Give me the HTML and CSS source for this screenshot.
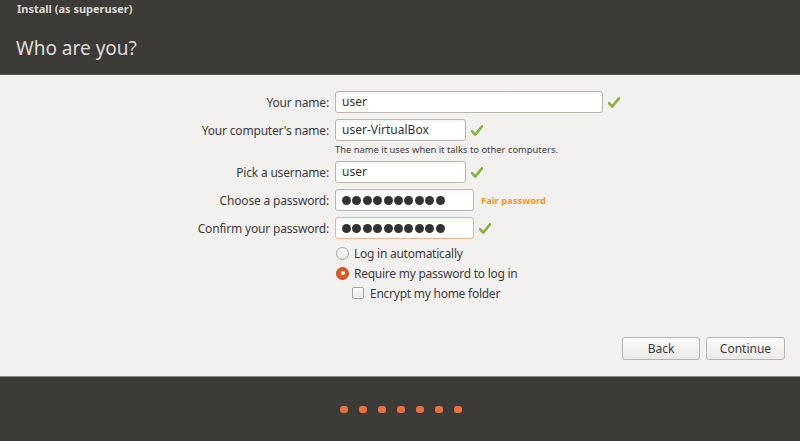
FILE: index.html
```html
<!DOCTYPE html>
<html>
<head>
<meta charset="utf-8">
<link rel="stylesheet" href="styles.css">
</head>
<body>
<div class="window">
  <header class="header">
    <div class="wm-title">Install (as superuser)</div>
    <h1 class="page-title">Who are you?</h1>
  </header>
  <main class="content">
    <div class="form">
      <div class="row">
        <label class="label">Your name:</label>
        <div class="field">
          <div class="entry entry-wide">user</div>
          <svg class="check" viewBox="0 0 12 11"><path d="M1 6.2 L4.2 9.6 L11 1.4" /></svg>
        </div>
      </div>
      <div class="row">
        <label class="label">Your computer's name:</label>
        <div class="field">
          <div class="entry entry-mid">user-VirtualBox</div>
          <svg class="check" viewBox="0 0 12 11"><path d="M1 6.2 L4.2 9.6 L11 1.4" /></svg>
        </div>
      </div>
      <div class="row row-hint">
        <span></span>
        <div class="hint">The name it uses when it talks to other computers.</div>
      </div>
      <div class="row">
        <label class="label">Pick a username:</label>
        <div class="field">
          <div class="entry entry-mid">user</div>
          <svg class="check" viewBox="0 0 12 11"><path d="M1 6.2 L4.2 9.6 L11 1.4" /></svg>
        </div>
      </div>
      <div class="row">
        <label class="label">Choose a password:</label>
        <div class="field">
          <div class="entry entry-pw"><span class="dots"><i></i><i></i><i></i><i></i><i></i><i></i><i></i><i></i><i></i><i></i></span></div>
          <span class="strength">Fair password</span>
        </div>
      </div>
      <div class="row">
        <label class="label">Confirm your password:</label>
        <div class="field">
          <div class="entry entry-pw entry-focus"><span class="dots"><i></i><i></i><i></i><i></i><i></i><i></i><i></i><i></i><i></i><i></i></span></div>
          <svg class="check" viewBox="0 0 12 11"><path d="M1 6.2 L4.2 9.6 L11 1.4" /></svg>
        </div>
      </div>
      <div class="row row-opt first-opt">
        <span></span>
        <div class="option"><span class="radio"></span>Log in automatically</div>
      </div>
      <div class="row row-opt">
        <span></span>
        <div class="option"><span class="radio radio-on"></span>Require my password to log in</div>
      </div>
      <div class="row row-opt">
        <span></span>
        <div class="option option-sub"><span class="checkbox"></span>Encrypt my home folder</div>
      </div>
    </div>
    <div class="buttons">
      <button class="btn btn-back">Back</button>
      <button class="btn btn-continue">Continue</button>
    </div>
  </main>
  <footer class="footer">
    <div class="progress">
      <span class="dot"></span><span class="dot"></span><span class="dot"></span><span class="dot"></span><span class="dot"></span><span class="dot"></span><span class="dot"></span>
    </div>
  </footer>
</div>
</body>
</html>
```

FILE: styles.css
```css
* { box-sizing: border-box; }
html, body {
  margin: 0;
  padding: 0;
  width: 800px;
  height: 441px;
  overflow: hidden;
  font-family: "Noto Sans", "Open Sans", "DejaVu Sans", sans-serif;
}
.window {
  display: flex;
  flex-direction: column;
  width: 800px;
  height: 441px;
  background: #f2f1f0;
}
.header {
  background: #3c3b37;
  height: 75px;
  padding: 2px 0 0 17px;
  border-bottom: 1px solid #5a5955;
}
.wm-title {
  color: #dcd9d2;
  font-size: 11px;
  font-weight: bold;
  line-height: 14px;
}
.page-title {
  margin: 20px 0 0 -1px;
  font-weight: normal;
  font-size: 19px;
  line-height: 24px;
  color: #dedcd7;
}
.content {
  flex: 1;
  display: flex;
  flex-direction: column;
  padding-top: 16px;
}
.form {
  display: flex;
  flex-direction: column;
  gap: 6px;
}
.row {
  display: grid;
  grid-template-columns: 329px 1fr;
  column-gap: 6px;
  align-items: center;
  height: 22px;
}
.label {
  text-align: right;
  font-size: 12px;
  letter-spacing: -0.18px;
  color: #3c3c3c;
}
.field {
  display: flex;
  align-items: center;
}
.entry {
  height: 22px;
  border: 1px solid #bab5ab;
  border-radius: 3px;
  background: linear-gradient(#f4f4f4, #ffffff 4px);
  font-size: 12px;
  line-height: 20px;
  padding: 0 6px;
  color: #333;
}
.entry-wide { width: 268px; }
.entry-mid { width: 131px; }
.entry-pw { width: 139px; display: flex; align-items: center; }
.entry-focus { border-color: #ebb39a; }
.dots { display: flex; gap: 1.4px; }
.dots i {
  display: block;
  width: 9px;
  height: 9px;
  border-radius: 50%;
  background: #333;
}
.check {
  width: 12px;
  height: 11px;
  margin-left: 5px;
  fill: none;
  stroke: #8ab438;
  stroke-width: 2.6;
  stroke-linecap: round;
  stroke-linejoin: round;
}
.strength {
  margin-left: 7px;
  font-size: 9.4px;
  font-weight: bold;
  color: #f7941e;
}
.row-hint {
  height: 14px;
  margin-top: -4px;
  margin-bottom: -2px;
}
.hint {
  font-size: 9.4px;
  color: #3c3c3c;
  line-height: 14px;
}
.row-opt { height: 18px; margin-top: -4px; }
.first-opt { margin-top: -1px; }
.option {
  display: flex;
  align-items: center;
  font-size: 12px;
  letter-spacing: -0.25px;
  color: #3c3c3c;
  padding-left: 1px;
}
.option-sub { padding-left: 17px; }
.radio {
  width: 13px;
  height: 13px;
  border-radius: 50%;
  border: 1px solid #a6a39d;
  background: linear-gradient(#fafafa, #ecebe9);
  margin-right: 5px;
  position: relative;
}
.radio-on {
  border-color: #c2481c;
  background: #dd5a24;
}
.radio-on::after {
  content: "";
  position: absolute;
  left: 3.5px;
  top: 3.5px;
  width: 4px;
  height: 4px;
  border-radius: 50%;
  background: #fff;
}
.checkbox {
  width: 12px;
  height: 12px;
  border-radius: 2px;
  border: 1px solid #a6a39d;
  background: linear-gradient(#fafafa, #ecebe9);
  margin-right: 6px;
}
.buttons {
  display: flex;
  justify-content: flex-end;
  gap: 6px;
  padding-right: 15px;
  margin-top: 35px;
}
.btn {
  height: 23px;
  border: 1px solid #b8b5b0;
  border-radius: 3px;
  background: linear-gradient(#fcfcfb, #e9e8e6);
  font-family: inherit;
  font-size: 12px;
  color: #3c3c3c;
  padding: 0;
}
.btn-back { width: 78px; }
.btn-continue { width: 79px; }
.footer {
  height: 65px;
  background: #3c3b37;
  border-top: 1px solid #8c8a85;
  display: flex;
  justify-content: center;
  padding-top: 29px;
  padding-left: 1px;
}
.progress { display: flex; gap: 11px; height: 8px; }
.dot {
  width: 8px;
  height: 7px;
  border-radius: 3px;
  background: #ec6f3e;
}
```
